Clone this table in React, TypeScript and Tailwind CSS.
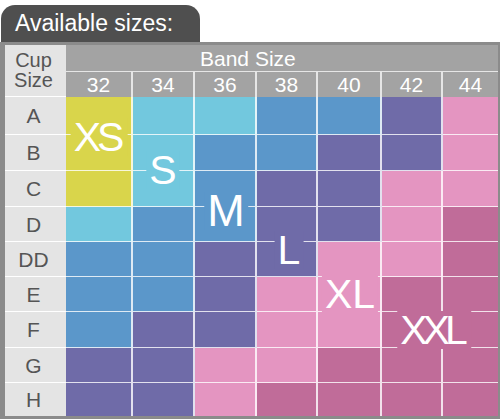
import React from "react";

const COLORS: Record<string, string> = {
  Y: "bg-[#d9d54b]",
  C: "bg-[#72c8de]",
  B: "bg-[#5b97ca]",
  P: "bg-[#6f6ba8]",
  K: "bg-[#e495c1]",
  D: "bg-[#c06c99]",
};

const ROWS: { cup: string; cells: string[] }[] = [
  { cup: "A", cells: ["Y", "C", "C", "B", "B", "P", "K"] },
  { cup: "B", cells: ["Y", "C", "B", "B", "P", "P", "K"] },
  { cup: "C", cells: ["Y", "C", "B", "P", "P", "K", "K"] },
  { cup: "D", cells: ["C", "B", "B", "P", "P", "K", "D"] },
  { cup: "DD", cells: ["B", "B", "P", "P", "K", "K", "D"] },
  { cup: "E", cells: ["B", "B", "P", "K", "K", "D", "D"] },
  { cup: "F", cells: ["B", "P", "P", "K", "K", "D", "D"] },
  { cup: "G", cells: ["P", "P", "K", "K", "D", "D", "D"] },
  { cup: "H", cells: ["P", "P", "K", "D", "D", "D", "D"] },
];

const BANDS = ["32", "34", "36", "38", "40", "42", "44"];

type Label = { text: string; cls: string; bg: string };

const LABELS: Label[] = [
  { text: "XS", cls: "left-[99px] top-[137px] tracking-[-4px] pr-[7px]", bg: "bg-[#d9d54b]" },
  { text: "S", cls: "left-[163px] top-[170px]", bg: "bg-[#72c8de]" },
  { text: "M", cls: "left-[226px] top-[211px] text-[45px]", bg: "bg-[#5b97ca]" },
  { text: "L", cls: "left-[289px] top-[250px]", bg: "bg-[#6f6ba8]" },
  { text: "XL", cls: "left-[350px] top-[294px]", bg: "bg-[#e495c1]" },
  { text: "XXL", cls: "left-[434px] top-[330px] tracking-[-5px] pr-[8px]", bg: "bg-[#c06c99]" },
];

export default function App() {
  return (
    <div className="relative w-[500px] h-[419px] bg-white font-['Liberation_Sans',Arial,sans-serif] overflow-hidden">
      <div className="ml-[1px] mt-[5px] w-[199px] h-[37px] bg-[#4f4f4f] rounded-t-[14px] text-white text-[23px] leading-none pl-[14px] pt-[7px]">
        Available sizes:
      </div>
      <div className="bg-[#8b8b8b] pt-[3px] pl-[5px] pr-[2px] pb-[3px]">
        <div className="grid grid-cols-[61px_67px_62px_62px_61px_64px_61px_55px] grid-rows-[27px_25px_38px_36px_36px_35px_35px_35px_36px_35px_33px]">
          <div className="row-span-2 bg-[#e4e4e4] border-b border-white flex flex-col items-center justify-center pr-[4px] pb-[2px] text-[#555555] text-[20px] leading-[20px]">
            <span>Cup</span>
            <span>Size</span>
          </div>
          <div className="col-span-7 bg-[#a3a3a3] border-b border-[#e6e6e6] flex items-center pl-[134px] text-white text-[21px] leading-none">
            Band Size
          </div>
          {BANDS.map((b, i) => (
            <div
              key={b}
              className={
                "bg-[#a3a3a3] flex items-center justify-center text-white text-[21px] leading-none " +
                (i < BANDS.length - 1 ? "border-r-2 border-[#e6e6e6]" : "")
              }
            >
              {b}
            </div>
          ))}
          {ROWS.map((row, r) => (
            <React.Fragment key={row.cup}>
              <div
                className={
                  "bg-[#e4e4e4] flex items-center justify-center pr-[4px] text-[#555555] text-[21px] leading-none " +
                  (r < ROWS.length - 1 ? "border-b border-white" : "")
                }
              >
                {row.cup}
              </div>
              {row.cells.map((c, i) => (
                <div
                  key={i}
                  className={
                    COLORS[c] +
                    " border-white/80 " +
                    (i < row.cells.length - 1 ? "border-r-2 " : "") +
                    (r < ROWS.length - 1 ? "border-b" : "")
                  }
                />
              ))}
            </React.Fragment>
          ))}
        </div>
      </div>
      {LABELS.map((l) => (
        <span
          key={l.text}
          className={
            "absolute -translate-x-1/2 -translate-y-1/2 text-white text-[41px] leading-[38px] px-[3px] " +
            l.bg +
            " " +
            l.cls
          }
        >
          {l.text}
        </span>
      ))}
    </div>
  );
}
